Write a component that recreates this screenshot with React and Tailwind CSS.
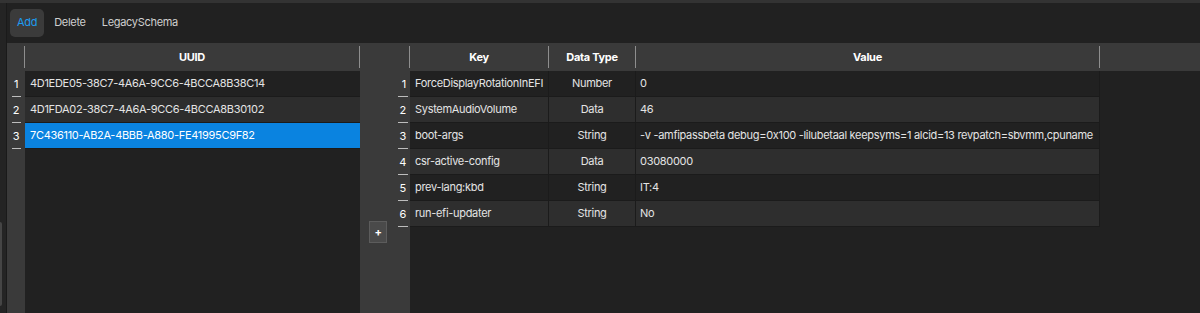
import React from "react";

const uuids = [
  "4D1EDE05-38C7-4A6A-9CC6-4BCCA8B38C14",
  "4D1FDA02-38C7-4A6A-9CC6-4BCCA8B30102",
  "7C436110-AB2A-4BBB-A880-FE41995C9F82",
];

const rows = [
  ["ForceDisplayRotationInEFI", "Number", "0"],
  ["SystemAudioVolume", "Data", "46"],
  ["boot-args", "String", "-v -amfipassbeta debug=0x100 -lilubetaal keepsyms=1 alcid=13 revpatch=sbvmm,cpuname"],
  ["csr-active-config", "Data", "03080000"],
  ["prev-lang:kbd", "String", "IT:4"],
  ["run-efi-updater", "String", "No"],
];

function HeadDivider() {
  return <div className="w-px self-stretch my-[3px] bg-[#8e8e8e]" />;
}

export default function App() {
  return (
    <div
      className="w-[1200px] h-[313px] bg-[#212121] flex flex-col overflow-hidden text-[11px] tracking-[-0.3px] text-[#e4e4e4]"
      style={{ fontFamily: "Inter, 'Noto Sans', sans-serif" }}
    >
      <div className="h-[3px] bg-[#333333]" />
      {/* toolbar */}
      <div className="h-[40px] flex">
        <div className="w-[7px] bg-[#242424] border-r border-[#1a1a1a]" />
        <div className="flex items-center gap-[4px] pl-[3px] pb-[1px]">
          <div className="h-[28px] px-[7px] flex items-center rounded-[5px] bg-[#3b3b3b] text-[#1d9bf0]">Add</div>
          <div className="h-[28px] px-[6px] flex items-center text-[#cfcfcf]">Delete</div>
          <div className="h-[28px] px-[6px] flex items-center text-[#cfcfcf]">LegacySchema</div>
        </div>
      </div>
      {/* body */}
      <div className="flex-1 flex min-h-0">
        <div className="w-[7px] bg-[#242424] border-r border-[#1a1a1a] relative">
          <div className="absolute left-0 top-[179px] w-[2px] h-[84px] rounded-r bg-[#454545]" />
        </div>
        {/* left table */}
        <div className="w-[353px] flex">
          <div className="w-[18px] bg-[#3a3a3a] flex flex-col">
            <div className="h-[28px] flex justify-end"><HeadDivider /></div>
            {uuids.map((_, i) => (
              <div key={i} className="h-[26px] relative flex items-center justify-center text-white">
                {i + 1}
                <div className="absolute bottom-0 left-[5px] w-[9px] h-px bg-[#bdbdbd]" />
              </div>
            ))}
          </div>
          <div className="flex-1 flex flex-col">
            <div className="h-[28px] bg-[#3a3a3a] flex">
              <div className="flex-1 flex items-center justify-center font-bold text-white">UUID</div>
              <HeadDivider />
            </div>
            {uuids.map((u, i) => (
              <div
                key={i}
                className={
                  "h-[26px] flex items-center pl-[5px] border-b border-[#1b1b1b] " +
                  (i === 2 ? "bg-[#0a83e0] text-white" : i % 2 === 0 ? "bg-[#212121]" : "bg-[#2d2d2d]")
                }
              >
                {u}
              </div>
            ))}
          </div>
        </div>
        {/* right table */}
        <div className="flex-1 flex">
          <div className="w-[50px] bg-[#3a3a3a] flex flex-col relative">
            <div className="h-[28px] flex justify-end"><HeadDivider /></div>
            {rows.map((_, i) => (
              <div key={i} className="h-[26px] relative flex items-center justify-end pr-[4px] text-white">
                {i + 1}
                <div className="absolute bottom-0 right-[2px] w-[10px] h-px bg-[#bdbdbd]" />
              </div>
            ))}
            <div className="absolute left-[9px] top-[178px] w-[18px] h-[22px] bg-[#4a4a4a] border border-[#5c5c5c] flex items-center justify-center text-white text-[11px] font-bold">
              +
            </div>
          </div>
          <div className="flex-1 flex flex-col">
            <div className="h-[28px] bg-[#3a3a3a] flex font-bold text-white">
              <div className="w-[138px] flex items-center justify-center">Key</div>
              <HeadDivider />
              <div className="w-[86px] flex items-center justify-center">Data Type</div>
              <HeadDivider />
              <div className="w-[463px] flex items-center justify-center">Value</div>
              <HeadDivider />
              <div className="flex-1" />
            </div>
            {rows.map((r, i) => (
              <div
                key={i}
                className={
                  "h-[26px] w-[690px] flex border-b border-[#1b1b1b] " +
                  (i % 2 === 0 ? "bg-[#212121]" : "bg-[#2e2e2e]")
                }
              >
                <div className="w-[139px] flex items-center pl-[5px] border-r border-[#1b1b1b] whitespace-nowrap">{r[0]}</div>
                <div className="w-[87px] flex items-center justify-center border-r border-[#1b1b1b]">{r[1]}</div>
                <div className="w-[464px] flex items-center pl-[4px] border-r border-[#1b1b1b] whitespace-nowrap overflow-hidden">{r[2]}</div>
              </div>
            ))}
          </div>
        </div>
      </div>
    </div>
  );
}
